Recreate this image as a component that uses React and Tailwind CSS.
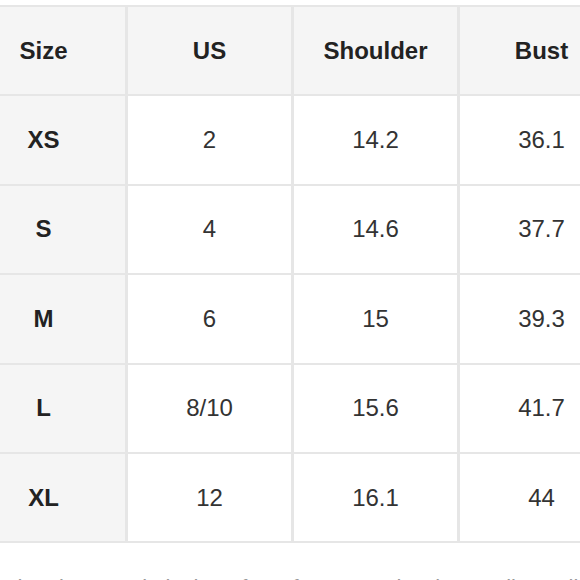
const header = ['Size', 'US', 'Shoulder', 'Bust']

const rows = [
  ['XS', '2', '14.2', '36.1'],
  ['S', '4', '14.6', '37.7'],
  ['M', '6', '15', '39.3'],
  ['L', '8/10', '15.6', '41.7'],
  ['XL', '12', '16.1', '44'],
]

export default function App() {
  return (
    <div className="w-[580px] h-[580px] overflow-hidden bg-white font-['Liberation_Sans',Arial,sans-serif]">
      <div className="pt-[5px] ml-[-38px] w-[664px]">
        <div className="grid grid-cols-[163px_163px_163px_163px] gap-x-[3px] gap-y-[2px] bg-[#e6e6e6] py-[2px]">
          {header.map((h) => (
            <div key={h} className="h-[87.4px] flex items-center justify-center bg-[#f5f5f5] text-[24px] font-bold text-[#222]">
              {h}
            </div>
          ))}
          {rows.map((r) =>
            r.map((c, i) => (
              <div
                key={r[0] + i}
                className={
                  i === 0
                    ? 'h-[87.4px] flex items-center justify-center bg-[#f5f5f5] text-[24px] font-bold text-[#222]'
                    : 'h-[87.4px] flex items-center justify-center bg-white text-[24px] text-[#333]'
                }
              >
                {c}
              </div>
            ))
          )}
        </div>
      </div>
      <p className="mt-[28px] pl-[4px] whitespace-nowrap text-[22px] text-[#999]">
        The sizes are in inches, for reference only, please allow a little difference.
      </p>
    </div>
  )
}
